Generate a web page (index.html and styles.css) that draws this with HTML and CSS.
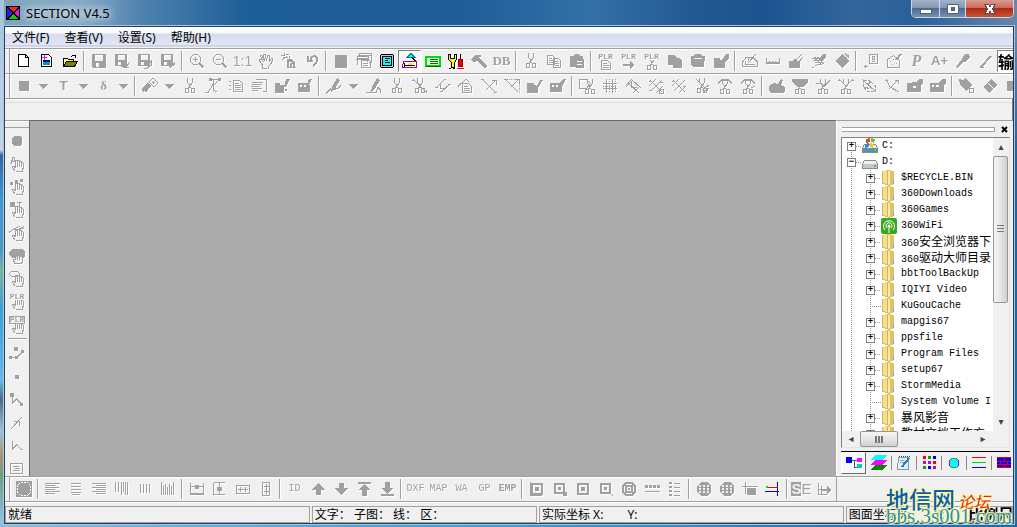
FILE: index.html
```html
<!DOCTYPE html>
<html lang="zh-CN">
<head>
<meta charset="utf-8">
<title>SECTION V4.5</title>
<link rel="stylesheet" href="styles.css">
</head>
<body>
<svg class="defs" aria-hidden="true">
  <symbol id="cut" viewBox="0 0 16 16"><path d="M5.500 0v4l2 3v2l-2 2M10.500 0v4l-3 5 3 2M3.500 10.500h3v4h-3zM9.500 10.500h3v4h-3z"/></symbol>
  <symbol id="hand" viewBox="0 0 16 16"><path d="M6.500 15.500h7v-2l1-2v-4l-1-1h-1v4v-5h-2v5v-6h-2v6v-6h-2v7l-2-1h-1v1l3 4"/></symbol>
  <symbol id="page" viewBox="0 0 16 16"><path d="M4.500 5.500h6l3 3v6h-9zM6 8.500h4M6 10.500h6M6 12.500h6"/></symbol>
  <symbol id="disk" viewBox="0 0 16 16"><path class="f" fill-rule="evenodd" d="M1 1h14v14H2l-1-1zM4 2v6h8V2zM5 10v4h3v-4z"/></symbol>
  <symbol id="pen" viewBox="0 0 16 16"><path class="f" d="M11 0l3 2-5 9-4 3 1-5z"/></symbol>
  <symbol id="brush" viewBox="0 0 16 16"><path class="f" d="M1 5h6v2h2l4-6h3v4l-4 5v5H1z"/></symbol>
  <symbol id="down" viewBox="0 0 9 5"><path class="f" d="M0 0h9L4.500 5z"/></symbol>
  <symbol id="folder" viewBox="0 0 16 16">
    <path fill="#d6b54b" stroke="none" d="M1 1l6-1v15l-6-1z"/><path fill="#f3df93" stroke="none" d="M2 1l4-1v14l-4-1z"/>
    <path fill="#e3c25c" stroke="none" d="M7 0l6 1v13l-6 2z"/><path fill="#f8ebb3" stroke="none" d="M7 1h2v13l-2 1z"/>
    <path fill="#62b6e4" stroke="none" d="M12 9h1v5h-1z"/>
  </symbol>
  <symbol id="drive" viewBox="0 0 16 16">
    <path fill="#f0f0f0" stroke="#8c8c8c" d="M2.500 6.500h11l2 3v5H.5v-5z"/><path fill="#c5c8ca" stroke="none" d="M1 10h14v4H1z"/><path fill="#44c842" stroke="none" d="M12 11h2v2h-2z"/>
  </symbol>
</svg>
<div class="window">
  <header class="titlebar">
    <svg class="logo c"><path fill="#000" d="M0 0h14v14H0z"/><path fill="#f22" d="M2 1h10L7 6z"/><path fill="#1d1df5" d="M1 2v10l5-5z" /><path fill="#e815e8" d="M13 2v10L8 7z"/><path fill="#15c715" d="M2 13h10L7 8z"/></svg>
    <h1>SECTION V4.5</h1>
    <div class="caption">
      <button class="min" aria-label="最小化"><svg class="c"><path fill="#fff" stroke="#556579" d="M2.500 8.500h11v4h-11z"/></svg></button>
      <button class="max" aria-label="最大化"><svg class="c"><path fill="#fff" stroke="#556579" fill-rule="evenodd" d="M2.500 3.500h11v9h-11zM6.500 6.500h3v3h-3z"/></svg></button>
      <button class="close" aria-label="关闭"><svg class="c"><path fill="#fff" stroke="#5d4c58" d="M2.500 3.500h4l1.500 2 1.500-2h4l-3.500 4.500 3.500 4.500h-4L8 10.500l-1.500 2h-4L6 8z"/></svg></button>
    </div>
  </header>

  <div class="client">
    <nav class="menu"><button>文件(F)</button><button>查看(V)</button><button>设置(S)</button><button>帮助(H)</button></nav>

    <div class="bar" role="toolbar" aria-label="标准">
      <i class="grip"></i>
      <button class="t" aria-label="新建"><svg class="c"><path fill="#fff" stroke="#000" d="M2.500 1.500h7l3 3v9h-10z"/><path stroke="#000" d="M9.500 1.500v3h3"/></svg></button>
      <button class="t" aria-label="新建工程"><svg class="c"><path fill="#fff" stroke="#000" d="M2.500 1.500h7l3 3v9h-10z"/><path fill="#0000a0" d="M4 7h7v2H4z"/><path fill="#0a9a9a" d="M4 9h7v3H4z"/><path stroke="#f0f" d="M3 4.500h5M5.500 2v5"/></svg></button>
      <button class="t" aria-label="打开"><svg class="c"><path fill="#ff8" stroke="#000" d="M1.500 13.500v-8h4l1 1h5v3"/><path fill="#808000" stroke="#000" d="M1.500 13.500l3-5h11l-3 5z"/><path stroke="#000" d="M9 3.500l2-1h2l1 2"/></svg></button>
      <i class="sep"></i>
      <button class="t" aria-label="保存"><svg><use href="#disk"/></svg></button>
      <button class="t" aria-label="保存文件"><svg><use href="#disk" width="14" height="14"/><path class="f" d="M7 12h6v2H7z"/><path d="M12.500 13.500l3-4M9 14.500h6"/></svg></button>
      <button class="t" aria-label="另存"><svg><use href="#disk" width="14" height="14"/><path d="M7 11.500h4l3-3v4l-4 3h-3M11 13.500l4-2"/></svg></button>
      <button class="t" aria-label="全部保存"><svg><use href="#disk" width="14" height="14"/><path class="f" d="M7 9h4v3l4-4v4l-5 3z"/></svg></button>
      <i class="sep"></i>
      <button class="t" aria-label="放大"><svg><path d="M4.500 1.500h4l3 3v4l-3 3h-4l-3-3v-4zM4 6.500h5M6.500 4v5"/><path class="w" d="M10.500 10.500l4 4"/></svg></button>
      <button class="t" aria-label="缩小"><svg><path d="M4.500 1.500h4l3 3v4l-3 3h-4l-3-3v-4zM4 6.500h5"/><path class="w" d="M10.500 10.500l4 4"/></svg></button>
      <button class="t ratio">1:1</button>
      <button class="t" aria-label="移动"><svg><path d="M4.500 15v-3l-3-4V6.500h2l2 2-3-5v-1h1l3 5-1-6h2l1 6 1-5h2v6l2-3h1v2l-2 4-2 2v3z"/></svg></button>
      <button class="t" aria-label="刷新"><svg><path class="f" d="M6 6h4l4 3v6H6z"/><path d="M0 2.500h3M3.500 0v3M1 6.500l5-3M5 1.500h3M2 4.500h5M8.500 3v3M14 14.500h1"/><path stroke="#fff" d="M8 9.500h3M8.500 9v5M11.500 11v3"/></svg></button>
      <button class="t" aria-label="撤销"><svg><path class="w" d="M4 3v5h5M7 7c0-5 7-5 6 0 0 2-1 4-4 6"/></svg></button>
      <i class="sep"></i>
      <button class="t" aria-label="停止"><svg><path class="f" d="M2 2h12v13H2z"/></svg></button>
      <button class="t" aria-label="窗口"><svg><path d="M3.500 4V.5h12v9H13M2 2.500h14M1.500 12V3.500h11v3M.5 5.500h11v3M0 6.500h12M5.500 7.500h8l1 1v6h-9zM7 10.500h5M7 12.500h5"/></svg></button>
      <button class="t" aria-label="屏幕"><svg class="c"><path fill="#c8c8c8" stroke="#000" d="M2.500 1.500h11l1 1v11l-1 1h-11l-1-1v-11z"/><path fill="#0ff" stroke="#000" d="M3.500 3.500h9v9h-9z"/><path stroke="#000" d="M6 5.500h5M6 7.500h3M6 9.500h5"/></svg></button>
      <button class="t on" aria-label="图层"><svg class="c"><path fill="#0ff" stroke="#088" d="M5 4.500l4-4 4 4z"/><path stroke="#000" d="M9.500 4l5 5v2h-10"/><path fill="#fff" stroke="#a000a0" d="M1.500 8.500h13v6h-14z"/><path fill="#fe0" d="M7 10h5l-1 3H6z"/><path stroke="#000" d="M2 12.500h11M2 9.500v4"/></svg></button>
      <button class="t" aria-label="图例"><svg class="c"><path fill="#dfd" stroke="#00df00" stroke-width="2" d="M1 4h14v9H1z"/><path stroke="#060" d="M5 6.500h8M5 8.500h8M5 10.500h8M.5 13.500h15"/></svg></button>
      <button class="t" aria-label="工具"><svg class="c"><path fill="#ff0" stroke="#000" d="M.5 1.500h2v4h4v-4h2v5l-2 3v5h-3v-5l-3-3z"/><path stroke="#000" d="M12.500 1v5"/><path fill="#e00" stroke="#900" d="M10.500 6.500h4v7h-4z"/><path stroke="#f00" d="M9 15.500h7"/><path stroke="#000" d="M1 15.500h2M5 15.500h2"/></svg></button>
      <button class="t" aria-label="锤子"><svg><path class="f" d="M0 7l4-5h6v2H8l1 2 7 7-2 3-8-8-3 1z"/></svg></button>
      <button class="t serif big">DB</button>
      <i class="sep"></i>
      <button class="t" aria-label="剪切"><svg><use href="#cut"/></svg></button>
      <button class="t" aria-label="复制"><svg><path d="M1.500 2.500h5l2 2v7h-7zM3 5.500h3M3 7.500h4M3 9.500h4M7.500 5.500h5l2 2v7h-7zM9 8.500h3M9 10.500h4M9 12.500h4"/></svg></button>
      <button class="t" aria-label="粘贴"><svg><path class="f" fill-rule="evenodd" d="M1 3h4l1-2h4l1 2h3v3h1v9H7l-1-1H1zM8 8v1h5V8zM8 11v1h5v-1z"/></svg></button>
      <i class="sep"></i>
      <button class="t stack" aria-label="PLR 复制"><b>PLR</b><svg class="s"><use href="#page" width="16" height="16" x="-1" y="-5"/></svg></button>
      <button class="t stack" aria-label="PLR 移动"><b>PLR</b><svg class="s"><path class="w" d="M2 5h8"/><path class="f" d="M9 1l5 4-5 4z"/></svg></button>
      <button class="t stack" aria-label="PLR 剪切"><b>PLR</b><svg class="s"><use href="#cut" width="16" height="16" y="-5"/></svg></button>
      <button class="t" aria-label="复制区"><svg><path class="f" d="M1 2h6l3 3h3l2 3v7H6v-3H1z"/></svg></button>
      <button class="t" aria-label="粘贴区"><svg><path class="f" d="M1 3h3l1-2h6l1 2h3v5h-1v6H3l-2-2z"/><path stroke="#f0f0f0" d="M4 5.500h8"/></svg></button>
      <button class="t" aria-label="编辑区"><svg><use href="#brush"/></svg></button>
      <i class="sep"></i>
      <button class="t" aria-label="角度"><svg><path d="M.5 13.500V9l4-5h6l5 5v4.500zM3 11.500h10M6 10l8-9M3.500 8v3M6.500 5v3"/></svg></button>
      <button class="t" aria-label="测量"><svg><path d="M1.500 5v5h13V5M4.500 8v2M7.500 8v2M10.500 8v2M1 9.500h14"/></svg></button>
      <button class="t" aria-label="清除"><svg><path class="f" d="M1 8h3l3-2 3 2 2 1v6H1z"/><path d="M7 8l7-7M10 10l5-6M8 7l5-5"/></svg></button>
      <button class="t" aria-label="刷子"><svg><path class="f" d="M8 6l4-5h3v3l-4 5z"/><path d="M1 5.500h7M2 7.500h10M4 9.500h8M6 11.500h4M3.500 4l7 8M6.500 4l6 7M3 8l5-4M1 14.500h2M4 12.500h2"/></svg></button>
      <button class="t" aria-label="填充"><svg><path class="f" d="M8 1l7 7-7 7-7-7z"/><path d="M11 .5l4 4M12 5l3-3"/></svg></button>
      <i class="sep"></i>
      <button class="t" aria-label="点属性"><svg><path d="M6.500 1.500h8v9h-8zM9.500 3.500h2v3h-2zM9 8.500h3M1 13.500h4M2.500 12v3"/></svg></button>
      <button class="t" aria-label="区编辑"><svg><path d="M1.500 14.500v-8l6-4 6 5v7zM4 8.500h1M7 6.500h1M6 11.500h1M10 10.500h1"/><path class="w" d="M10 7l5-6"/></svg></button>
      <button class="t serif p">P</button>
      <button class="t big2">A+</button>
      <button class="t" aria-label="取样"><svg><path class="f" d="M8 4l2-3h4l1 3-3 4-3 1-7 6-1-1 6-8z"/></svg></button>
      <button class="t" aria-label="画线"><svg><path class="w" d="M3 14L13 3"/><path d="M2 14.500h4"/></svg></button>
      <button class="t on ink">输</button>
    </div>

    <div class="bar" role="toolbar" aria-label="编辑">
      <i class="grip"></i>
      <button class="t" aria-label="点"><svg><path class="f" d="M3 3h10v10H3z"/></svg></button><button class="d" aria-label="更多"><svg><use href="#down"/></svg></button>
      <button class="t big2">T</button><button class="d" aria-label="更多"><svg><use href="#down"/></svg></button>
      <button class="t serif big">δ</button><button class="d" aria-label="更多"><svg><use href="#down"/></svg></button>
      <i class="sep"></i>
      <button class="t" aria-label="区"><svg><path class="f" d="M0 10l6-6 3 4-5 7-2-2-1 2z"/><path d="M7 4l4-4 5 5-4 4zM10 4.500h3M11.500 3v3"/></svg></button><button class="d" aria-label="更多"><svg><use href="#down"/></svg></button>
      <button class="t" aria-label="剪断"><svg><use href="#cut"/></svg></button>
      <button class="t" aria-label="加点"><svg><path d="M0 14.500h3l5-8M4 1.500h11M8.500 2v10l3 2M8 8L15 1"/><path class="f" d="M4 0h3v3H4zM13 0h3v3h-3z"/></svg></button>
      <button class="t" aria-label="列表"><svg><path d="M1 3.500h2M1 7.500h2M1 11.500h2M5.500 2.500h6l3 3v8h-9zM7 5.500h4M7 7.500h6M7 9.500h6M7 11.500h6"/></svg></button>
      <button class="t" aria-label="对齐"><svg><path d="M5 1.500h10v12h-3M1 4.500h11M1 6.500h10M0 8.500h9M1 10.500h10M1 12.500h6"/></svg></button>
      <button class="t" aria-label="改属性"><svg><path class="f" d="M1 5h5v2h4v8H1zM12 1h4l-4 8h-2zM11 11h2v2h-2z"/></svg></button>
      <button class="t" aria-label="批改"><svg><path class="f" fill-rule="evenodd" d="M1 5h9v2h3v7H1zM3 7v2h2V7zM7 7v2h2V7zM12 1h3l-3 6h-2z"/></svg></button>
      <i class="sep"></i>
      <button class="t" aria-label="输入线"><svg><use href="#pen"/><path d="M0 15.500l5-5M7 11.500l5-1 3-3"/></svg></button><button class="d" aria-label="更多"><svg><use href="#down"/></svg></button>
      <button class="t" aria-label="编辑线"><svg><use href="#pen"/><path d="M0 14.500h10l2-5 2 2v3"/></svg></button>
      <button class="t" aria-label="剪线"><svg><use href="#cut"/></svg></button>
      <button class="t" aria-label="剪节点"><svg><path d="M1 1l14 14M0 2.500h3M14 12v3"/><use href="#cut"/></svg></button>
      <button class="t" aria-label="平行线"><svg><path d="M1 10L10 1M6 14l9-8M5.500 6v4h4M0 9.500h3M9 1.500h2M13 6.500h3M5 13.500h3"/></svg></button>
      <button class="t" aria-label="线属性"><svg><path d="M0 8.500L8 1l3 3"/><use href="#page"/></svg></button>
      <button class="t" aria-label="延长"><svg><path d="M1 1l13 13M5 12l9-9M11 2.500h4v4M0 1.500h3M13 14.500h3"/></svg></button>
      <button class="t" aria-label="缩短"><svg><path d="M1 1l13 13M7 9l7-7M11 1.500h4v4M0 1.500h3"/><path stroke-dasharray="1 1" d="M3 1.500h12v13"/></svg></button>
      <button class="t" aria-label="改线"><svg><path class="f" d="M0 5h7v2l3 1 3-6h3l-5 8v5H0z"/></svg></button>
      <button class="t" aria-label="批改线"><svg><path class="f" fill-rule="evenodd" d="M0 5h9l4-4h3l-4 8v5H0zM2 7v2h2V7zM6 7v2h2V7z"/></svg></button>
      <i class="sep"></i>
      <button class="t" aria-label="区裁剪"><svg><path d="M.5 1.500h7l4 4-4 5h-7z"/><use href="#cut" x="3" y="1"/></svg></button>
      <button class="t" aria-label="网格"><svg><path d="M4.500 1v14M10.500 1v14M1 5.500h14M1 10.500h14"/><path stroke-dasharray="1 1" d="M7.500 1v14M1 8.500h14M13.500 1v14"/></svg></button>
      <button class="t" aria-label="交点"><svg><path d="M1 7L7 1M3 5l11 10M7 2l9 8M1 9l6-6M8 15l7-7M6.500 4v5h5"/></svg></button>
      <button class="t" aria-label="合并"><svg><path d="M1 8l7-7M3 13L14 2M2 2l12 12M8 15l7-7M1 3.500h3M12 4.500h3M1 12.500h3M11.500 11.500h4v4h-4z"/></svg></button>
      <button class="t" aria-label="打散"><svg><path d="M1 8l7-7M3 13L14 2M2 2l12 12M8 15l7-7M1 3.500h3M12 8.500h3"/></svg></button>
      <button class="t" aria-label="剪多线"><svg><path d="M2 1l12 12M8 12l7-5M9 14l6-4"/><use href="#cut"/></svg></button>
      <button class="t" aria-label="圆弧"><svg><path d="M1 5.500l4-4h6l4 4M3 2.500h10"/><use href="#cut" y="1"/></svg></button>
      <button class="t" aria-label="圆弧剪断"><svg><path d="M1 5.500l4-4h6l4 4M3 2.500h10M11 10l4-2"/><use href="#cut" y="1"/></svg></button>
      <i class="sep"></i>
      <button class="t" aria-label="造区"><svg><path class="f" d="M0 8l5-3 4 1 3-5 2 1-2 5 4 2v5l-2 1H2l-2-2z"/></svg></button>
      <button class="t" aria-label="剪区"><svg><path class="f" d="M0 1h16v3l-5 5H5L0 4z"/><use href="#cut" y="1"/></svg></button>
      <button class="t" aria-label="分割"><svg><path d="M1 5.500h5l3 3 6-6"/><use href="#cut" y="1"/></svg></button>
      <button class="t" aria-label="联合"><svg><path d="M1 1l6 6h2l6-6M0 2.500h3M13 2.500h3"/><use href="#cut" y="1"/></svg></button>
      <button class="t" aria-label="弧段"><svg><path stroke-dasharray="3 1" d="M2 2v6l4 5h9M3 2.500h5l6 5v6"/><path d="M1 1l14 13M6 6l5-2M4.500 9.500l4 1"/></svg></button>
      <button class="t" aria-label="弧线"><svg><path d="M2 1l4 8 9 5M5 11l9-9M11 2.500h3v3M1 2.500h3"/></svg></button>
      <button class="t" aria-label="改区"><svg><path class="f" fill-rule="evenodd" d="M0 5h4l1-1h5l2-3h4v4l-2 3v6H0zM6 8v2h3V8z"/></svg></button>
      <button class="t" aria-label="批改区"><svg><path class="f" fill-rule="evenodd" d="M0 5h9l3-4h4v4l-2 3v6H0zM2 7v2h2V7zM6 7v2h3V7z"/></svg></button>
      <i class="sep"></i>
      <button class="t" aria-label="选区"><svg><path class="f" d="M0 1l4 1 3-2 6 7-6 6-6-6z"/><path d="M10.500 10.500h4v4h-4z"/></svg></button>
      <button class="t" aria-label="区填充"><svg><path class="f" d="M9 1l6 6-8 8-6-6z"/><path stroke="#fff" d="M6 5l6 6"/></svg></button>
      <button class="t" aria-label="区块"><svg><path class="f" d="M2 3h13v10H2z"/></svg></button>
    </div>

    <div class="bar blank"></div>

    <main class="work">
      <div class="side" role="toolbar" aria-label="选择">
        <button class="t" aria-label="选择"><svg><path class="f" d="M5 3h6l2 2v6l-2 2H5l-2-2V5z"/></svg></button>
        <button class="t" aria-label="注释"><svg><path d="M1 7.500h1l2-6h1l2 6M2 5.500h4"/><use href="#hand"/></svg></button>
        <button class="t" aria-label="点选"><svg><path class="f" d="M1 3h3v3H1zM6 1h3v3H6zM11 0h3v3h-3z"/><use href="#hand"/></svg></button>
        <button class="t" aria-label="点文字"><svg><path class="f" d="M1 0h5v5H1z"/><path d="M8 .5h5M10.500 0v5"/><use href="#hand"/></svg></button>
        <button class="t" aria-label="线选"><svg><path d="M0 7.500l4-3 4 1 7-4M5 4l6-3M9 5l6-2"/><use href="#hand"/></svg></button>
        <button class="t" aria-label="区选"><svg><path class="f" d="M0 4l3-3h10l3 3v4l-2 2H3L0 7z"/><path fill="#f0f0f0" d="M5.500 15.500l-1-4h2v-3h2v-1h2v1h3v5l-1 2z"/><path d="M8.500 8v4M10.500 8v4"/></svg></button>
        <button class="t" aria-label="圈选"><svg><path d="M.5 2.500l2-2h6l2 2v1l-2 2h-6l-2-2z"/><use href="#hand"/></svg></button>
        <button class="t stack" aria-label="PLR 选择"><b>PLR</b><svg class="s"><use href="#hand" width="16" height="16" y="-6"/></svg></button>
        <button class="t stack boxed" aria-label="PLR 框选"><b>PLR</b><svg class="s"><use href="#hand" width="16" height="16" y="-6"/></svg></button>
        <i class="sep"></i>
        <button class="t" aria-label="节点"><svg><path class="f" d="M5 1h4v4H5zM0 10h3v3H0zM6 10h3v3H6zM12 4h3v3h-3z"/><path d="M2 11.500h6l5-5"/></svg></button>
        <button class="t" aria-label="单点"><svg><path class="f" d="M6 6h4v4H6z"/></svg></button>
        <button class="t" aria-label="折线"><svg><path class="f" d="M1 1h4v4H1zM11 11h3v3h-3z"/><path d="M3.500 4v7l4-4 5 5"/></svg></button>
        <button class="t" aria-label="方向"><svg><path d="M2 14L13 2M5 6.500h5v4"/></svg></button>
        <button class="t" aria-label="角"><svg><path d="M3.500 3v8l4-4 6 5"/></svg></button>
        <button class="t" aria-label="文本"><svg><path d="M1.500 2.500h12v10h-12zM4 5.500h6M6 7.500h5M4 9.500h7"/></svg></button>
      </div>
      <section class="canvas" aria-label="绘图区"></section>
      <aside class="dock">
        <div class="dockhead"><i></i><button aria-label="关闭"><svg class="c"><path stroke="#000" stroke-width="2" d="M1 1l5 5M6 1L1 6"/></svg></button></div>
        <div class="browser">
          <div class="treebox">
            <ul class="tree">
              <li><button class="x">+</button><i></i><svg class="c"><use href="#drive"/><path fill="#5b8fae" d="M1 10h14v4H1z"/><path fill="#5fd44a" d="M12 11h2v2h-2z"/><path fill="#e74a25" d="M4 1l4-1v4l-4 1z"/><path fill="#77b83a" d="M9 0l4 1-1 4-3-1z"/><path fill="#328bd1" d="M3 6l4-1v4l-4 1z"/><path fill="#f3c436" d="M8 5l4 1-1 4-3-1z"/></svg><span>C:</span></li>
              <li><button class="x">−</button><i></i><svg class="c"><use href="#drive"/></svg><span>D:</span></li>
              <li class="branch"><ul>
                <li><button class="x">+</button><i></i><svg class="c"><use href="#folder"/></svg><span>$RECYCLE.BIN</span></li>
                <li><button class="x">+</button><i></i><svg class="c"><use href="#folder"/></svg><span>360Downloads</span></li>
                <li><button class="x">+</button><i></i><svg class="c"><use href="#folder"/></svg><span>360Games</span></li>
                <li><button class="x">+</button><i></i><svg class="c round"><rect width="16" height="16" rx="2" fill="#38a81c"/><path stroke="#fff" d="M4 12a5.500 5.500 0 1 1 8 0M6 10a3 3 0 1 1 4 0M8 8v7"/><circle cx="8" cy="8" r="1.500" fill="#fff"/></svg><span>360WiFi</span></li>
                <li><button class="x">+</button><i></i><svg class="c"><use href="#folder"/></svg><span>360<em>安全浏览器下</em></span></li>
                <li><button class="x">+</button><i></i><svg class="c"><use href="#folder"/></svg><span>360<em>驱动大师目录</em></span></li>
                <li><button class="x">+</button><i></i><svg class="c"><use href="#folder"/></svg><span>bbtToolBackUp</span></li>
                <li><button class="x">+</button><i></i><svg class="c"><use href="#folder"/></svg><span>IQIYI Video</span></li>
                <li><i class="long"></i><svg class="c"><use href="#folder"/></svg><span>KuGouCache</span></li>
                <li><button class="x">+</button><i></i><svg class="c"><use href="#folder"/></svg><span>mapgis67</span></li>
                <li><button class="x">+</button><i></i><svg class="c"><use href="#folder"/></svg><span>ppsfile</span></li>
                <li><button class="x">+</button><i></i><svg class="c"><use href="#folder"/></svg><span>Program Files</span></li>
                <li><button class="x">+</button><i></i><svg class="c"><use href="#folder"/></svg><span>setup67</span></li>
                <li><button class="x">+</button><i></i><svg class="c"><use href="#folder"/></svg><span>StormMedia</span></li>
                <li><i class="long"></i><svg class="c"><use href="#folder"/></svg><span>System Volume I</span></li>
                <li><button class="x">+</button><i></i><svg class="c"><use href="#folder"/></svg><span><em>暴风影音</em></span></li>
                <li><button class="x">+</button><i></i><svg class="c"><use href="#folder"/></svg><span><em>教材文档工作方</em></span></li>
              </ul></li>
            </ul>
          </div>
          <div class="vscroll"><button aria-label="上">▴</button><div class="thumb"></div><button aria-label="下">▾</button></div>
          <div class="hscroll"><button aria-label="左">◂</button><div class="thumb"></div><button aria-label="右">▸</button></div>
        </div>
        <div class="tabs">
          <button class="sel" aria-label="目录"><svg class="c"><path fill="#00f" d="M0 2h6v6H0z"/><path stroke="#555" d="M6 5.500h6M8.500 5v7H12"/><path fill="#f0f" d="M11 3h5v4h-5z"/><path fill="#0cc" d="M11 9h5v4h-5z"/></svg></button>
          <button aria-label="图层"><svg class="c"><path fill="#0ff" d="M4 0h12l-4 5H0z"/><path fill="#f0f" d="M4 5h12l-4 5H0z"/><path fill="#080" d="M4 10h12l-4 5H0z"/></svg></button>
          <button aria-label="属性"><svg class="c"><path fill="#dff1f4" stroke="#89a" d="M2.500 2.500h10v12h-11z"/><path stroke="#356" stroke-dasharray="1 1" d="M3 1.500h11"/><path stroke="#9ab" d="M4 5.500h5M4 7.500h4"/><path stroke="#2676b8" stroke-width="2" d="M6 12l7-9"/></svg></button>
          <button aria-label="颜色"><svg class="c"><path fill="#f00" d="M2 1h3v3H2zM12 6h3v3h-3z"/><path fill="#0a0" d="M7 1h3v3H7zM2 11h3v3H2z"/><path fill="#c0c" d="M2 6h3v3H2zM7 6h3v3H7zM12 11h3v3h-3z"/><path fill="#00f" d="M12 1h3v3h-3zM7 11h3v3H7z"/></svg></button>
          <button aria-label="子图"><svg class="c"><path fill="#0ff" stroke="#b0b" d="M5.500 3.500h5l2 2v5l-2 2h-5l-2-2v-5z"/><path stroke="#0c0" d="M5 3.500h6M5 12.500h6"/></svg></button>
          <button aria-label="线型"><svg class="c"><path stroke="#f00" d="M1 2.500h14"/><path stroke="#0d0" d="M1 7.500h14"/><path stroke="#00f" d="M1 12.500h14"/></svg></button>
          <button aria-label="图案"><svg class="c"><path fill="#00f" d="M1 2h14v11H1z"/><path stroke="#e00" d="M1 2.500h14M1 6.500h14M1 9.500h14M1 12.500h14M8.500 3v3M4.500 6v4M11.500 6v4M8.500 10v3"/></svg></button>
        </div>
      </aside>
    </main>

    <div class="bar foot">
      <div class="footbar" role="toolbar" aria-label="排列">
      <i class="grip"></i>
      <button class="t" aria-label="选框"><svg><path class="f" d="M0 0h16v16H0z"/><path stroke="#fff" stroke-dasharray="2 1" d="M4.500 1.500h7l3 3v7l-3 3h-7l-3-3v-7z"/></svg></button>
      <i class="sep"></i>
      <button class="t" aria-label="左对齐"><svg><path d="M0 2.500h15M0 4.500h10M0 6.500h14M0 8.500h10M0 10.500h15M0 12.500h10"/></svg></button>
      <button class="t" aria-label="居中"><svg><path d="M3 2.500h10M3 5.500h10M3 8.500h10M3 11.500h10M4 13.500h8"/></svg></button>
      <button class="t" aria-label="右对齐"><svg><path d="M1 2.500h14M5 4.500h10M1 6.500h14M5 8.500h10M1 10.500h14M5 12.500h10"/></svg></button>
      <button class="t" aria-label="上对齐"><svg><path d="M1.500 1v10M4.500 1v10M7.500 1v13M9.500 1v10M11.500 1v13M13.500 1v13"/></svg></button>
      <button class="t" aria-label="垂直居中"><svg><path d="M3.500 3v9M6.500 3v9M9.500 3v9M12.500 3v9"/></svg></button>
      <button class="t" aria-label="下对齐"><svg><path d="M1.500 1v13M3.500 5v9M5.500 3v11M7.500 6v8M9.500 3v11M11.500 5v9M13.500 1v13"/></svg></button>
      <i class="sep"></i>
      <button class="t" aria-label="水平中"><svg><path d="M1.500 2v11h13V2M1 5.500h13M1 12.500h14"/><path class="f" d="M6 4h4v4H6z"/></svg></button>
      <button class="t" aria-label="垂直中"><svg><path d="M1.500 2v12M2 1.500h11M2 13.500h11M7.500 2v12"/><path class="f" d="M5 6h5v4H5z"/></svg></button>
      <button class="t" aria-label="等宽"><svg><path d="M1.500 4.500h13v8h-13zM3 8.500h10M5.500 6v5M10.500 6v5"/></svg></button>
      <button class="t" aria-label="等高"><svg><path d="M4.500 1.500h7v13h-7zM8.500 3v10M6 5.500h5M6 10.500h5"/></svg></button>
      <i class="sep"></i>
      <button class="t serif small">ID</button>
      <button class="t" aria-label="上移"><svg><path class="f" d="M8 2l7 7h-4v5H6V9H1z"/></svg></button>
      <button class="t" aria-label="下移"><svg><path class="f" d="M6 2h5v5h4l-7 7-7-7h5z"/></svg></button>
      <button class="t" aria-label="置顶"><svg><path class="f" d="M2 1h13v2H2zM8 3l6 6h-3v6H6V9H2z"/></svg></button>
      <button class="t" aria-label="置底"><svg><path class="f" d="M2 13h13v2H2zM6 1h5v6h3l-6 6-6-6h4z"/></svg></button>
      <i class="sep"></i>
      <button class="t small">DXF</button><button class="t small">MAP</button><button class="t small">WA</button><button class="t small">GP</button><button class="t small strong">EMP</button>
      <i class="sep"></i>
      <button class="t" aria-label="图框"><svg><path class="w2" d="M3 3h10v10H3z"/><path class="f" d="M6 6h4v4H6z"/><path d="M1.500 1v13H13"/></svg></button>
      <button class="t" aria-label="放大图框"><svg><path class="w2" d="M3 3h9v9H3z"/><path class="f" d="M6 6h3v3H6zM11 11h4v4h-4z"/></svg></button>
      <button class="t" aria-label="方框"><svg><path class="w2" d="M3 3h10v10H3z"/><path class="f" d="M6 6h4v4H6z"/></svg></button>
      <button class="t" aria-label="查框"><svg><path class="w2" d="M3 3h9v9H3z"/><path class="f" d="M6 6h3v3H6z"/><path d="M11 11l4 4"/></svg></button>
      <button class="t" aria-label="圆框"><svg><path class="w2" d="M5 2h6l3 3v6l-3 3H5l-3-3V5zM5 5h6v6H5z"/><path class="f" d="M7 7h2v2H7z"/></svg></button>
      <button class="t" aria-label="分段"><svg><path class="f" d="M1 4h3v3H1zM5 4h3v3H5zM9 4h3v3H9zM13 4h3v3h-3z"/><path d="M1 10.500h15"/></svg></button>
      <button class="t" aria-label="条目"><svg><path class="f" d="M2 1h3v2H2zM2 5h3v2H2zM2 9h3v2H2zM2 13h3v2H2z"/><path d="M7 2.500h6M7 6.500h6M7 10.500h6M7 14.500h6"/></svg></button>
      <i class="sep"></i>
      <button class="t" aria-label="球面"><svg><path class="f" d="M5 1h6l4 4v6l-4 4H5l-4-4V5z"/><path stroke="#f0f0f0" stroke-width="2" stroke-dasharray="2 2" d="M3 5h11M3 8h11M3 11h11"/></svg></button>
      <button class="t" aria-label="球面网"><svg><path class="f" d="M5 1h6l4 4v6l-4 4H5l-4-4V5z"/><path stroke="#f0f0f0" stroke-width="2" stroke-dasharray="2 2" d="M3 5h11M3 8h11M3 11h11"/></svg></button>
      <button class="t" aria-label="裁框"><svg><path d="M0 5.500h16M3.500 1v12"/><path class="f" d="M5 7h9v7H5z"/></svg></button>
      <button class="t" aria-label="交线"><svg class="c"><path stroke="#f00" d="M3 6.500h9"/><path stroke="#0d0" stroke-width="2" d="M1 6h2"/><path stroke="#00f" d="M0 10.500h14M12.500 1v14"/></svg></button>
      <i class="sep"></i>
      <button class="t boxs"><b>S</b>E</button>
      <button class="t" aria-label="导出"><svg><path d="M1.500 2v11h8M4.500 5v8M1 8.500h10"/><path class="w" d="M4 9h7"/><path class="f" d="M10 5l5 4-5 4z"/></svg></button>
      </div>
    </div>

    <footer class="status">
      <span class="s1">就绪</span>
      <span class="s2">文字： 子图： 线： 区：</span>
      <span class="s3"><span>实际坐标 X:</span><span>Y:</span></span>
      <span class="s4"><span>图面坐标 X:</span><span>Y:</span><strong>比例尺</strong></span>
    </footer>
  </div>
  <div class="mark"><div><b>地信网</b><i>论坛</i></div><p>bbs.3s001.com</p></div>
</div>
</body>
</html>
```
FILE: styles.css
```css
* { box-sizing: border-box; }
body { margin: 0; font: 12px/16px "Noto Sans", "Noto Sans CJK SC", sans-serif; color: #000; }
button { font: inherit; color: inherit; background: none; border: 0; padding: 0; margin: 0; }
h1, p, ul { margin: 0; padding: 0; }
i, em { font-style: normal; }
.defs { position: absolute; width: 0; height: 0; }

svg { display: block; width: 16px; height: 16px; flex: none; fill: none; stroke: currentColor; shape-rendering: crispEdges; overflow: hidden; }
svg.c { stroke: none; }
svg.round { shape-rendering: auto; }
.f { fill: currentColor; stroke: none; }
.w, .w2 { stroke-width: 2; }

.window {
  position: relative; display: flex; flex-direction: column; height: 100vh; min-height: 320px; padding: 0 3px 3px 4px;
  overflow: hidden;
  background:
    linear-gradient(90deg, #8dbdd8, #5fb0dc 20%, #3f9bd0 50%, #1c69aa) bottom / 100% 4px no-repeat,
    linear-gradient(180deg, #a4c4dd, #c5d4e6 150px, #34689c 155px, #3d99cf 200px, #4a9ac4 250px, #7ab59a 270px, #3d9fd4 310px, #62bbe8 380px, #4c6c80 400px, #9cc4d8 430px, #b0946c 455px, #6f9f80 475px, #8dc8e8) left / 4px 100% no-repeat,
    linear-gradient(90deg, #7fa5bd, #86a9c4 8%, #4e82af 14%, #1f5f99 24%, #1f5e98 46%, #3470a8 58%, #22588f 69%, #1c5490 75%, #34659b 84%, #2a6099 90%, #6587ab) top / 100% 28px no-repeat,
    linear-gradient(180deg, #7791ae, #275d9a 30%, #2168ab);
}
.titlebar { display: flex; align-items: center; flex: none; height: 26px; padding-left: 2px; }
.logo { width: 14px; height: 14px; }
.titlebar h1 { flex: 1; padding-left: 6px; font: 13px/18px "Noto Sans", sans-serif; text-shadow: 0 0 6px #fff, 0 0 10px #d8e6f0, 0 0 14px #b8d0e0; }
.caption { display: flex; align-self: flex-start; height: 18px; border: 1px solid #c9d6e4; border-top: 0; border-radius: 0 0 5px 5px; overflow: hidden; }
.caption button { display: flex; align-items: center; justify-content: center; width: 28px; border-right: 1px solid #d4deea; background: linear-gradient(#a3b3c9, #8597b3 45%, #4f6b91 50%, #7690b2); }
.caption .max { width: 26px; }
.caption .close { width: 47px; border-right: 0; background: linear-gradient(#d99c90, #cc6a5a 45%, #ae2b16 50%, #c95233); }

.client { display: flex; flex-direction: column; flex: 1; min-height: 0; border: 1px solid #24405e; outline: 1px solid #a9c4dc; background: #f0f0f0; }
.menu { display: flex; gap: 15px; flex: none; height: 21px; padding-left: 7px; background: linear-gradient(#fff, #f6f8fc 6px, #d5dcef 7px, #e1e6f6 18px, #b8bed4 19px, #f0f0f0 20px); }
.menu button { font-size: 12px; line-height: 20px; white-space: nowrap; }

.bar { display: flex; flex: none; height: 25px; align-items: center; border-top: 1px solid #a0a0a0; box-shadow: inset 0 1px #fff; overflow: hidden; }
.grip { flex: none; width: 7px; align-self: stretch; background: linear-gradient(90deg, transparent 4px, #a0a0a0 4px 5px, #fff 5px 6px, transparent 6px); }
.t { display: flex; flex: none; align-items: center; justify-content: center; width: 23px; height: 22px; color: #a0a0a0; white-space: nowrap; filter: drop-shadow(1px 1px 0 #fff); }
.d { display: flex; flex: none; align-items: center; justify-content: center; width: 17px; height: 22px; color: #a0a0a0; filter: drop-shadow(1px 1px 0 #fff); }
.d svg { width: 9px; height: 5px; }
.sep { flex: none; width: 6px; height: 20px; background: linear-gradient(90deg, transparent 2px, #a0a0a0 2px 3px, #fff 3px 4px, transparent 4px); }
.on { border: 1px solid #808080; border-right-color: #fff; border-bottom-color: #fff; background: #f9f9f9; }
.ink { justify-content: flex-start; overflow: hidden; color: #000; background: #fff; font: bold 16px/20px "Noto Sans CJK SC", sans-serif; }
.ratio { font: 14px/16px "Liberation Sans", sans-serif; }
.serif { font-family: "Liberation Serif", serif; }
.big { font-size: 13px; font-weight: bold; }
.big2 { font: bold 13px/16px "Liberation Sans", sans-serif; }
.p { font-size: 16px; font-style: italic; font-weight: bold; }
.small { font: 10px/12px "Liberation Mono", monospace; }
.strong { font-weight: bold; }
.stack { flex-direction: column; }
.stack b { font: bold 8px/7px "Liberation Mono", monospace; }
.stack .s { height: 10px; }
.boxed b { border: 1px solid #a0a0a0; line-height: 6px; }
.boxs { font: 15px/14px "Liberation Sans", sans-serif; }
.boxs b { width: 10px; background: #a0a0a0; color: #f0f0f0; font-weight: bold; }
.blank { height: 22px; border-right: 1px solid #808080; box-shadow: inset 0 1px #fff, inset 0 3px #f0f0f0, inset 0 4px #dfdfdf; }

.work { display: flex; flex: 1; min-height: 0; }
.side { display: flex; flex: none; flex-direction: column; align-items: center; width: 24px; border-top: 1px solid #a0a0a0; overflow: hidden; }
.side::before { content: ""; flex: none; width: 100%; height: 5px; border-top: 1px solid #fff; border-bottom: 1px solid #a0a0a0; margin-bottom: 1px; }
.side .t { height: 23px; }
.side .sep { width: 19px; height: 6px; background: linear-gradient(transparent 2px, #a0a0a0 2px 3px, #fff 3px 4px, transparent 4px); }
.canvas { flex: 1; min-width: 0; border-top: 1px solid #696969; border-left: 1px solid #696969; background: #ababab; }

.dock { display: flex; flex: none; flex-direction: column; width: 177px; padding: 0 3px 0 4px; border-top: 1px solid #a0a0a0; border-left: 1px solid #fff; }
.dockhead { display: flex; flex: none; align-items: center; justify-content: space-between; height: 16px; padding: 0 2px 0 1px; }
.dockhead i { width: 153px; height: 5px; border: 1px solid #a0a0a0; border-left: 0; background: #fff; }
.dockhead svg { width: 7px; height: 7px; shape-rendering: auto; }
.browser { display: grid; flex: 1; min-height: 0; grid-template-columns: minmax(0, 1fr) 16px; grid-template-rows: minmax(0, 1fr) 16px; border: 1px solid #808080; border-right-color: #e3e3e3; border-bottom-color: #e3e3e3; background: #f0f0f0; }
.treebox { overflow: hidden; padding-left: 1px; background: #fff; }
.tree, .tree ul { list-style: none; background: repeating-linear-gradient(#909090 0 1px, transparent 1px 2px) 8px 8px / 1px 100% no-repeat; }
.tree li { display: flex; align-items: center; height: 16px; padding-left: 4px; }
.tree .branch { display: block; height: auto; padding-left: 19px; }
.tree ul { background-position: 8px 0; }
.x { flex: none; width: 9px; height: 9px; border: 1px solid #808080; background: #fff; font: bold 9px/7px "Liberation Mono", monospace; }
.tree i { flex: none; width: 6px; height: 1px; background: repeating-linear-gradient(90deg, #909090 0 1px, transparent 1px 2px); }
.tree i.long { width: 11px; margin-left: 4px; }
.tree span { padding-left: 4px; font: 10px/16px "Liberation Mono", monospace; white-space: pre; }
.tree em { font: 12px/16px "Noto Sans CJK SC", sans-serif; }
.vscroll, .hscroll { display: flex; background: #f0f0f0; }
.vscroll { flex-direction: column; }
.vscroll button, .hscroll button { flex: none; width: 18px; height: 18px; font: 10px/16px "DejaVu Sans", sans-serif; color: #444; }
.vscroll button { width: 16px; }
.hscroll button { height: 16px; }
.vscroll .thumb { flex: none; height: 50%; width: 15px; margin-bottom: auto; border: 1px solid #979797; border-radius: 2px; background: repeating-linear-gradient(#777 0 1px, transparent 1px 3px) center / 7px 9px no-repeat, linear-gradient(90deg, #f6f6f6, #e6e6e6 50%, #cfcfcf); }
.hscroll { padding-right: 1px; }
.hscroll .thumb { width: 38px; margin-right: auto; border: 1px solid #979797; border-radius: 2px; background: repeating-linear-gradient(90deg, #777 0 2px, transparent 2px 3px) center / 8px 7px no-repeat, linear-gradient(#f6f6f6, #e6e6e6 50%, #cfcfcf); }
.tabs { display: flex; flex: none; height: 25px; margin-top: 3px; border-top: 1px solid #000; }
.tabs button { display: flex; flex: none; align-items: center; justify-content: center; width: 25px; height: 22px; }
.tabs button + button + button { background: linear-gradient(#888, #888) left center / 1px 14px no-repeat; }
.tabs .sel { border: 1px solid #fff; border-right-color: #696969; border-bottom-color: #696969; background: #f8f8f8; }

.foot { height: 26px; border-bottom: 1px solid #a0a0a0; }
.footbar { display: flex; flex: none; align-items: center; height: 24px; width: 832px; border-right: 1px solid #a0a0a0; }
.status { display: flex; flex: none; gap: 2px; height: 21px; padding-top: 3px; border-top: 1px solid #fff; }
.status > span { border: 1px solid #a0a0a0; padding-left: 2px; line-height: 15px; white-space: pre; overflow: hidden; }
.s1 { flex: 306 1 0; }
.s2 { flex: 225 1 0; }
.s3 { flex: 306 1 0; display: flex; gap: 24px; }
.s4 { flex: 166 1 0; display: flex; gap: 24px; }
.s4 strong { margin-left: auto; padding-right: 2px; font-size: 15px; }

.mark { position: absolute; right: 6px; bottom: 3px; width: 125px; text-shadow: 0 0 2px #ffffa0, 1px 1px 1px #ffffa0, -1px -1px 1px #ffffa0, 1px -1px 1px #ffffa0; color: #2f8cc8; }
.mark div { display: flex; align-items: flex-end; height: 18px; }
.mark b { font: 500 23px/20px "Noto Sans CJK SC", sans-serif; color: #0c5cb4; }
.mark i { padding-left: 3px; font: italic 16px/14px "Noto Sans CJK SC", sans-serif; color: #e82020; }
.mark p { font: 21px/16px "Liberation Serif", serif; white-space: nowrap; }
```
